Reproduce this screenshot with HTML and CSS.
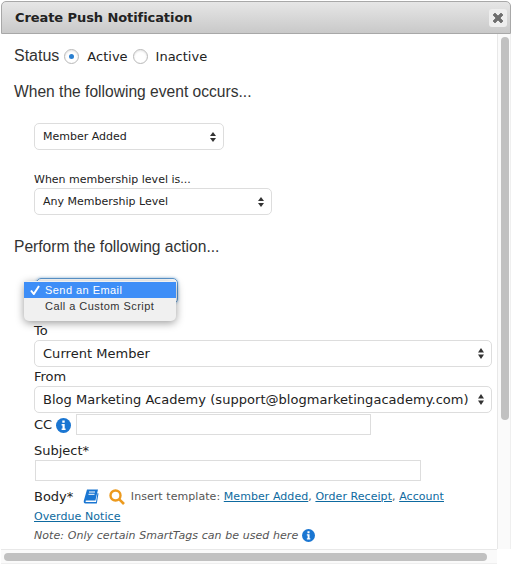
FILE: index.html
```html
<!DOCTYPE html>
<html lang="en">
<head>
<meta charset="utf-8">
<title>Create Push Notification</title>
<link rel="stylesheet" href="styles.css">
</head>
<body>
<div class="dialog">
  <header class="titlebar">
    <h1 class="title">Create Push Notification</h1>
    <button class="close" aria-label="Close">
      <svg width="12" height="12" viewBox="0 0 12 12"><path d="M3 1 6 4 9 1 11 3 8 6 11 9 9 11 6 8 3 11 1 9 4 6 1 3Z" fill="#6f6f6f" stroke="#6f6f6f" stroke-width=".8" stroke-linejoin="round"/></svg>
    </button>
  </header>
  <div class="viewport">
    <main class="content">
      <div class="status-row">
        <span class="heading status-label">Status</span>
        <span class="radio checked"></span><span class="radio-text active-text">Active</span>
        <span class="radio"></span><span class="radio-text">Inactive</span>
      </div>
      <h2 class="heading when">When the following event occurs...</h2>
      <div class="select event-select"><span>Member Added</span><svg class="arrows" width="6" height="10" viewBox="0 0 7 11" preserveAspectRatio="none"><path d="M3.5 0 7 4.5H0ZM3.5 11 0 6.5H7Z"/></svg></div>
      <div class="label level-label">When membership level is...</div>
      <div class="select level-select"><span>Any Membership Level</span><svg class="arrows" width="6" height="10" viewBox="0 0 7 11" preserveAspectRatio="none"><path d="M3.5 0 7 4.5H0ZM3.5 11 0 6.5H7Z"/></svg></div>
      <h2 class="heading perform">Perform the following action...</h2>
      <div class="action-wrap">
        <div class="action-select"></div>
        <div class="menu">
          <div class="menu-item selected"><svg class="check" width="10" height="10" viewBox="0 0 10 10"><path d="M1 5.5 3.8 9 9 1" fill="none" stroke="#fff" stroke-width="2"/></svg>Send an Email</div>
          <div class="menu-item">Call a Custom Script</div>
        </div>
      </div>
      <div class="label-lg to-label">To</div>
      <div class="select wide"><span>Current Member</span><svg class="arrows" width="6" height="11" viewBox="0 0 7 11" preserveAspectRatio="none"><path d="M3.5 0 7 4.5H0ZM3.5 11 0 6.500H7Z"/></svg></div>
      <div class="label-lg from-label">From</div>
      <div class="select wide"><span>Blog Marketing Academy (support@blogmarketingacademy.com)</span><svg class="arrows" width="6" height="11" viewBox="0 0 7 11" preserveAspectRatio="none"><path d="M3.5 0 7 4.5H0ZM3.5 11 0 6.500H7Z"/></svg></div>
      <div class="cc-row">
        <span class="label-lg">CC</span>
        <svg class="info" width="15" height="15" viewBox="0 0 15 15"><circle cx="7.5" cy="7.5" r="7.5" fill="#1a76d2"/><path d="M6.3 2.6h2.4v2.2H6.3ZM5.6 6h3.1v4.6h.9v1.5H5.6v-1.500h.9V7.500h-.9Z" fill="#fff"/></svg>
        <span class="input cc-input"></span>
      </div>
      <div class="label-lg subject-label">Subject*</div>
      <div class="input subject-input"></div>
      <div class="body-row">
        <span class="label-lg">Body*</span>
        <svg class="book" width="16" height="15" viewBox="0 0 16 15"><path d="M4 .5h11l-2.600 11H3.200c-.8 0-1 1.400 0 1.400H13l1.500-9 1 .5L13.800 14.500H2.500C1 14.500.5 13.200.8 11.800Z" fill="#1a76d2"/><path d="M6 3h6M5.500 5.300h6" stroke="#fff" stroke-width="1"/></svg>
        <svg class="search" width="16" height="16" viewBox="0 0 16 16"><circle cx="6.500" cy="6.500" r="5" fill="none" stroke="#ec9a1e" stroke-width="2.400"/><path d="M10.300 10.300 15 15" stroke="#ec9a1e" stroke-width="2.600"/></svg>
        <span class="insert">Insert template: <a href="#">Member Added</a>, <a href="#">Order Receipt</a>, <a href="#">Account</a></span>
      </div>
      <div class="insert overdue"><a href="#">Overdue Notice</a></div>
      <div class="note"><em>Note: Only certain SmartTags can be used here</em>
        <svg class="info note-info" width="13" height="13" viewBox="0 0 15 15"><circle cx="7.500" cy="7.500" r="7.500" fill="#1a76d2"/><path d="M6.300 2.600h2.400v2.200H6.300ZM5.600 6h3.100v4.600h.9v1.500H5.600v-1.500h.9V7.500h-.9Z" fill="#fff"/></svg>
      </div>
    </main>
    <div class="vtrack"><div class="vthumb"></div></div>
  </div>
  <div class="htrack"><div class="hthumb"></div></div>
</div>
</body>
</html>
```
FILE: styles.css
```css
* { box-sizing: border-box; }
html, body { margin: 0; height: 100%; background: #fff; overflow: hidden; }
body { font-family: "DejaVu Sans", Verdana, sans-serif; color: #222; }
.dialog { width: 512px; height: 566px; padding: 1px 1px 0; display: flex; flex-direction: column; }
.titlebar {
  height: 33px; flex: none; display: flex; align-items: center; justify-content: space-between;
  padding: 0 3px 0 13px;
  background: linear-gradient(#e6e6e6, #c9c9c9);
  border: 1px solid #a8a8a8; border-radius: 5px 5px 0 0;
}
.title { margin: 0; font-size: 13px; font-weight: 700; color: #222; white-space: nowrap; letter-spacing: -.08px; }
.close {
  width: 18px; height: 18px; padding: 0; border: 0; border-radius: 3px; background: #eeeeee;
  display: flex; align-items: center; justify-content: center;
}
.viewport { flex: none; height: 515px; display: flex; }
.content { width: 496px; flex: none; height: 515px; overflow: hidden; padding: 0 0 0 13px; }
.heading { margin: 0; font-family: "Liberation Sans", Arial, sans-serif; font-weight: 400; font-size: 15.6px; line-height: 20px; color: #333; }
.status-label { margin-right: 5px; font-size: 16px; }
.status-row { display: flex; align-items: center; height: 20px; margin-top: 12px; }
.radio { width: 15px; height: 15px; border-radius: 50%; border: 1px solid #b9b9b9; background: #fff; display: flex; align-items: center; justify-content: center; flex: none; box-shadow: inset 0 1px 2px #e4e4e4; }
.radio.checked::after { content: ""; width: 5px; height: 5px; border-radius: 50%; background: #2a7fd0; }
.radio-text { font-size: 13px; color: #222; margin-left: 8px; }
.active-text { margin-right: 5px; }
.when { margin-top: 16px; }
.select {
  display: flex; align-items: center; justify-content: space-between;
  margin-left: 20px; height: 27px; padding: 0 7px 0 8px; background: #fff;
  border: 1px solid #ddd; border-radius: 5px; font-size: 11px; color: #222;
}
.arrows { fill: #333; flex: none; }
.event-select { width: 190px; margin-top: 21px; }
.level-label { margin: 23px 0 0 20px; font-size: 11px; line-height: 14px; color: #222; height: 15px; }
.level-select { width: 238px; margin-top: 0; }
.perform { margin-top: 22px; }
.action-wrap { position: relative; height: 62px; margin: 0; }
.action-select { position: absolute; left: 22px; top: 21px; width: 142px; height: 26px; border: 1px solid #5b97cf; border-radius: 5px; box-shadow: 0 0 3px #8db9e2; }
.menu { position: absolute; left: 10px; top: 24px; width: 152px; height: 40px; padding: 1px 0; background: #f0f0f0; border-radius: 5px; box-shadow: 0 2px 8px rgba(0,0,0,.4); font-family: "Liberation Sans", Arial, sans-serif; font-size: 11px; letter-spacing: .45px; color: #333; z-index: 1; }
.menu-item { height: 16px; line-height: 16px; padding-left: 21px; position: relative; }
.selected { background: #3e8ef7; color: #fff; height: 16px; }
.check { position: absolute; left: 6px; top: 3px; }
.label-lg { font-size: 13px; line-height: 16px; color: #222; }
.to-label { margin: 4px 0 0 20px; height: 17px; }
.wide { width: 458px; font-size: 13px; white-space: nowrap; letter-spacing: .04px; }
.from-label { margin: 1px 0 0 20px; height: 18px; padding-top: 1px; }
.cc-row { display: flex; align-items: center; margin: 1px 0 0 20px; height: 21px; }
.info { flex: none; }
.cc-row .info { margin-left: 4px; margin-top: 1px; }
.input { display: block; background: #fff; border: 1px solid #ddd; }
.cc-input { width: 295px; height: 21px; margin-left: 5px; }
.subject-label { margin: 8px 0 0 20px; height: 17px; }
.subject-input { width: 386px; height: 21px; margin-left: 21px; }
.body-row { display: flex; align-items: center; margin: 7px 0 0 20px; height: 17px; white-space: nowrap; }
.book { margin-left: 10px; }
.search { margin-left: 10px; }
.insert { font-size: 11px; color: #555; letter-spacing: .06px; }
.body-row .insert { margin-left: 5.5px; }
.insert a { color: #0e6aa0; text-decoration: underline; }
.overdue { margin: 4px 0 0 20px; height: 16px; line-height: 16px; }
.note { margin: 2px 0 0 20px; font-size: 11px; color: #555; display: flex; align-items: center; height: 16px; white-space: nowrap; letter-spacing: .07px; }
.note-info { margin-left: 4px; }
.vtrack { width: 14px; flex: none; height: 515px; background: #fafafa; border-left: 1px solid #e8e8e8; border-right: 1px solid #efefef; padding: 3px 0 0 3px; }
.vthumb { width: 8px; height: 383px; border-radius: 4px; background: #c1c1c1; }
.htrack { width: 496px; height: 15px; flex: none; background: #fafafa; border-top: 1px solid #e8e8e8; border-bottom: 1px solid #efefef; padding: 3px 0 0 3px; }
.hthumb { width: 483px; height: 8px; border-radius: 4px; background: #c1c1c1; }
```
